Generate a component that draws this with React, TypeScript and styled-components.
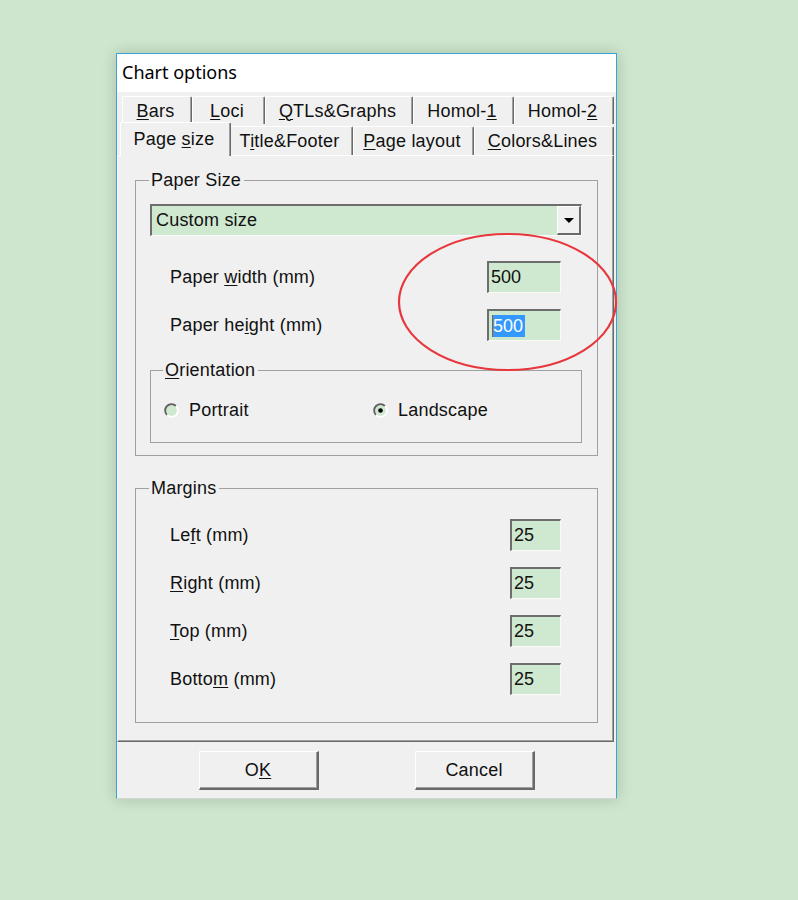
import styled, { createGlobalStyle } from 'styled-components';

const GlobalStyle = createGlobalStyle`
  html, body {
    margin: 0;
    padding: 0;
    background: #cde6cd;
  }
  body {
    font-family: 'Liberation Sans', Arial, sans-serif;
  }
`;

const FIELD_GREEN = '#cfe8d0';
const FACE = '#f0f0f0';

const Page = styled.div`
  min-height: 900px;
  padding: 53px 0 0 116px;
  box-sizing: border-box;
`;

const Window = styled.div`
  position: relative;
  width: 501px;
  box-sizing: border-box;
  border: 1px solid #3aa3d5;
  border-bottom-color: #d6d6d6;
  background: ${FACE};
  box-shadow: 0 0 14px rgba(0, 0, 0, 0.18);
  color: #111;
  font-size: 18px;
  letter-spacing: 0.2px;
`;

const TitleBar = styled.div`
  height: 38px;
  box-sizing: border-box;
  display: flex;
  align-items: center;
  padding: 0 0 3px 5px;
  background: #fff;
  font-family: 'Noto Sans', 'Open Sans', sans-serif;
  font-size: 18px;
  letter-spacing: 0;
  color: #000;
`;

const TabStrip = styled.div`
  padding: 4px 2px 0 5px;
`;

const TabRow = styled.div<{ $front?: boolean }>`
  display: flex;
  align-items: flex-end;
  height: ${(p) => (p.$front ? 31 : 28)}px;
`;

const Tab = styled.div<{ $w: number; $active?: boolean; $back?: boolean }>`
  position: relative;
  z-index: ${(p) => (p.$active ? 2 : 1)};
  box-sizing: border-box;
  flex: 0 0 ${(p) => p.$w + (p.$active ? 4 : 0)}px;
  margin: ${(p) => (p.$active ? '0 -2px -1px' : '0')};
  height: ${(p) => (p.$active ? 34 : p.$back ? 28 : 29)}px;
  display: flex;
  align-items: center;
  justify-content: center;
  padding-top: ${(p) => (p.$active ? 0 : 1)}px;
  padding-right: 3px;
  background: ${FACE};
  border-top: 1px solid #fff;
  border-left: 1px solid #fff;
  border-right: 1px solid #696969;
  box-shadow: inset -1px 0 0 #a0a0a0;
  border-radius: 2px 2px 0 0;
  white-space: nowrap;
`;

const Mn = styled.span`
  text-decoration: underline;
  text-underline-offset: 2px;
  text-decoration-thickness: 1px;
`;

const Panel = styled.div`
  margin-right: 2px;
  padding: 14px 15px 18px 17px;
  border-top: 1px solid #fff;
  border-left: 1px solid #fff;
  border-right: 1px solid #696969;
  border-bottom: 1px solid #696969;
  box-shadow: inset -1px -1px 0 #a0a0a0;
  display: flex;
  flex-direction: column;
  gap: 22px;
`;

const Group = styled.fieldset<{ $pad: string }>`
  margin: 0;
  min-width: 0;
  padding: ${(p) => p.$pad};
  border: 1px solid #a0a0a0;
  border-radius: 0;
`;

const Legend = styled.legend`
  padding: 0 3px 0 2px;
  margin-left: -1px;
  line-height: 20px;
`;

const Combo = styled.div`
  position: relative;
  height: 32px;
  box-sizing: border-box;
  display: flex;
  align-items: center;
  padding-left: 4px;
  background: ${FIELD_GREEN};
  border-top: 2px solid #6d6d6d;
  border-left: 2px solid #6d6d6d;
  border-right: 1px solid #fafafa;
  border-bottom: 1px solid #fafafa;
`;

const ComboButton = styled.div`
  position: absolute;
  top: 0;
  right: 0;
  width: 24px;
  height: 29px;
  box-sizing: border-box;
  display: flex;
  align-items: center;
  justify-content: center;
  background: ${FACE};
  border-top: 1px solid #fff;
  border-left: 1px solid #fff;
  border-right: 2px solid #696969;
  border-bottom: 2px solid #696969;
`;

const Rows = styled.div<{ $top: number }>`
  display: flex;
  flex-direction: column;
  gap: 16px;
  margin-top: ${(p) => p.$top}px;
  padding: 0 21px 0 20px;
`;

const Row = styled.div`
  height: 32px;
  display: flex;
  align-items: center;
  justify-content: space-between;
`;

const TextBox = styled.div<{ $w: number }>`
  width: ${(p) => p.$w}px;
  height: 32px;
  box-sizing: border-box;
  display: flex;
  align-items: center;
  padding-left: 2px;
  background: ${FIELD_GREEN};
  border-top: 2px solid #6d6d6d;
  border-left: 2px solid #6d6d6d;
  border-right: 1px solid #fafafa;
  border-bottom: 1px solid #fafafa;
  letter-spacing: 0;
`;

const Caret = styled.span`
  width: 1px;
  height: 22px;
  margin-left: 1px;
  background: #9a5a2a;
`;

const Selected = styled.span`
  background: #3399ff;
  color: #fff;
  line-height: 22px;
  padding-right: 2px;
`;

const Orientation = styled.div`
  margin-top: 19px;
`;

const RadioRow = styled.div`
  display: flex;
  align-items: center;
  height: 20px;
`;

const Radio = styled.label<{ $w?: number }>`
  display: flex;
  align-items: center;
  gap: 10px;
  ${(p) => (p.$w ? `width: ${p.$w}px;` : '')}
`;

const ButtonBar = styled.div`
  display: flex;
  justify-content: center;
  gap: 96px;
  padding: 9px 0 8px;
`;

const Button = styled.div`
  width: 120px;
  height: 39px;
  box-sizing: border-box;
  display: flex;
  align-items: center;
  justify-content: center;
  background: ${FACE};
  border-top: 1px solid #fff;
  border-left: 1px solid #fff;
  border-right: 2px solid #696969;
  border-bottom: 2px solid #696969;
  box-shadow: inset -1px -1px 0 #a0a0a0;
`;

const Annotation = styled.svg`
  position: absolute;
  left: 280px;
  top: 178px;
  overflow: visible;
  pointer-events: none;
`;

function RadioMark({ checked }: Readonly<{ checked?: boolean }>) {
  return (
    <svg width="15" height="15" viewBox="0 0 15 15">
      <circle cx="7.5" cy="7.5" r="6.3" fill={FIELD_GREEN} />
      <path d="M12 3 A6.3 6.3 0 0 0 3 12" stroke="#5f5f5f" strokeWidth="1.8" fill="none" />
      <path d="M3 12 A6.3 6.3 0 0 0 12 3" stroke="#ffffff" strokeWidth="1.8" fill="none" />
      {checked && <circle cx="7.5" cy="7.5" r="2.3" fill="#000" />}
    </svg>
  );
}

const backTabs = [
  { w: 70, label: <><Mn>B</Mn>ars</> },
  { w: 73, label: <><Mn>L</Mn>oci</> },
  { w: 148, label: <><Mn>Q</Mn>TLs&amp;Graphs</> },
  { w: 101, label: <>Homol-<Mn>1</Mn></> },
  { w: 100, label: <>Homol-<Mn>2</Mn></> },
];

const frontTabs = [
  { w: 107, label: <>Page <Mn>s</Mn>ize</>, active: true },
  { w: 124, label: <>T<Mn>i</Mn>tle&amp;Footer</> },
  { w: 121, label: <><Mn>P</Mn>age layout</> },
  { w: 140, label: <><Mn>C</Mn>olors&amp;Lines</> },
];

const margins = [
  { label: <>Le<Mn>f</Mn>t (mm)</>, value: '25' },
  { label: <><Mn>R</Mn>ight (mm)</>, value: '25' },
  { label: <><Mn>T</Mn>op (mm)</>, value: '25' },
  { label: <>Botto<Mn>m</Mn> (mm)</>, value: '25' },
];

export default function App() {
  return (
    <Page>
      <GlobalStyle />
      <Window>
        <TitleBar>Chart options</TitleBar>
        <TabStrip>
          <TabRow>
            {backTabs.map((t, i) => (
              <Tab key={i} $w={t.w} $back>
                <span>{t.label}</span>
              </Tab>
            ))}
          </TabRow>
          <TabRow $front>
            {frontTabs.map((t, i) => (
              <Tab key={i} $w={t.w} $active={t.active}>
                <span>{t.label}</span>
              </Tab>
            ))}
          </TabRow>
        </TabStrip>
        <Panel>
          <Group $pad="14px 15px 12px 14px">
            <Legend>Paper Size</Legend>
            <Combo>
              <span>Custom size</span>
              <ComboButton>
                <svg width="10" height="5" viewBox="0 0 10 5">
                  <polygon points="0,0 10,0 5,5" fill="#000" />
                </svg>
              </ComboButton>
            </Combo>
            <Rows $top={25}>
              <Row>
                <span>
                  Paper <Mn>w</Mn>idth (mm)
                </span>
                <TextBox $w={74}>500</TextBox>
              </Row>
              <Row>
                <span>
                  Paper he<Mn>i</Mn>ght (mm)
                </span>
                <TextBox $w={74}>
                  <Caret />
                  <Selected>500</Selected>
                </TextBox>
              </Row>
            </Rows>
            <Orientation>
              <Group $pad="20px 13px 22px 13px">
                <Legend>
                  <Mn>O</Mn>rientation
                </Legend>
                <RadioRow>
                  <Radio $w={209}>
                    <RadioMark />
                    <span>Portrait</span>
                  </Radio>
                  <Radio>
                    <RadioMark checked />
                    <span>Landscape</span>
                  </Radio>
                </RadioRow>
              </Group>
            </Orientation>
          </Group>
          <Group $pad="21px 15px 27px 14px">
            <Legend>Margins</Legend>
            <Rows $top={0}>
              {margins.map((m, i) => (
                <Row key={i}>
                  <span>{m.label}</span>
                  <TextBox $w={51}>{m.value}</TextBox>
                </Row>
              ))}
            </Rows>
          </Group>
        </Panel>
        <ButtonBar>
          <Button>
            <span>
              O<Mn>K</Mn>
            </span>
          </Button>
          <Button>Cancel</Button>
        </ButtonBar>
        <Annotation width="222" height="142" viewBox="0 0 222 142">
          <ellipse cx="110.5" cy="70" rx="108.5" ry="68" fill="none" stroke="#e8373c" strokeWidth="2.2" />
        </Annotation>
      </Window>
    </Page>
  );
}
